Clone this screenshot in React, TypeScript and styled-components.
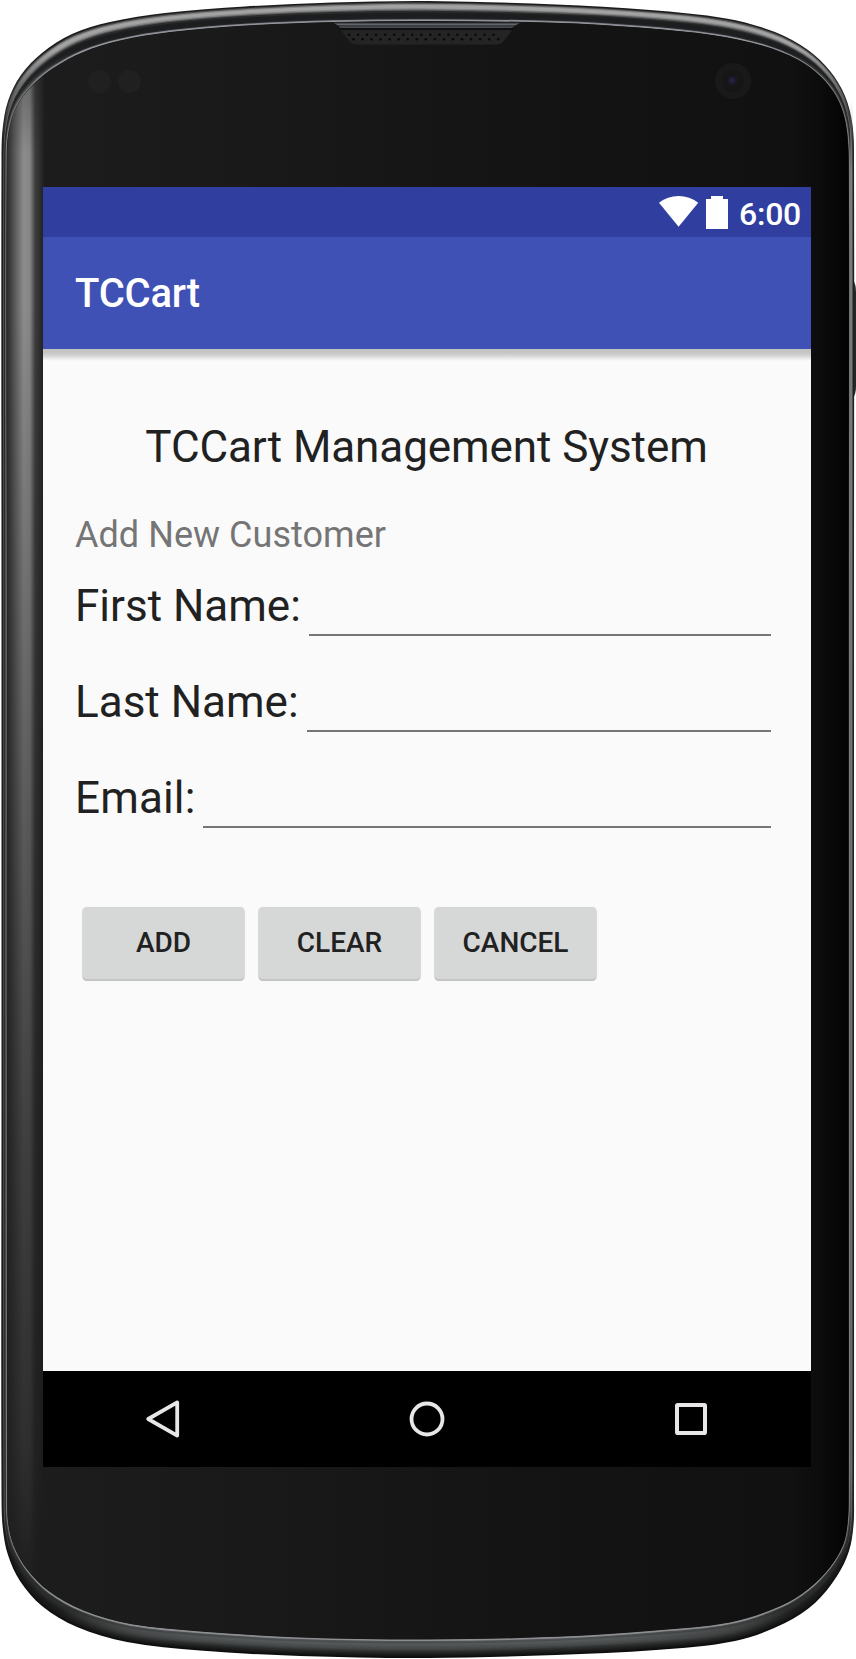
import React from "react";
import styled, { createGlobalStyle } from "styled-components";

const GlobalStyle = createGlobalStyle`
  body {
    margin: 0;
    background: #ffffff;
  }
  *, *::before, *::after {
    box-sizing: border-box;
  }
`;

type Point = [number, number];

/* Outer silhouette of the phone and the edge of its glass, matched point by point. */
const outerEdge: Point[] = [
  [428, 1], [333, 2.5], [245, 6.5], [165, 13], [110, 22], [72, 34], [42, 53], [21, 75], [8, 101], [2.5, 130], [1.5, 160],
  [1.5, 600], [1.5, 1100],
  [1.5, 1500], [3, 1530], [8, 1555], [20, 1581], [42, 1606], [77, 1627], [127, 1642], [200, 1650.5], [300, 1656], [428, 1658],
  [556, 1655], [656, 1650], [735, 1641], [785, 1623], [815, 1603], [837, 1576], [849, 1551], [853.5, 1525], [854, 1495],
  [854, 1100], [854, 600],
  [854, 160], [852.5, 125], [845, 96], [830, 71], [808, 50], [775, 32], [726, 18.5], [650, 10], [556, 4.5],
];
const innerEdge: Point[] = [
  [428, 21.5], [333, 22.5], [245, 26], [170, 32.5], [120, 41], [83, 52.5], [54, 68], [33, 85], [17, 106], [9, 131], [7, 160],
  [7, 600], [7, 1100],
  [7.5, 1500], [8.5, 1524], [14, 1546], [27, 1569], [49, 1591], [83, 1610], [132, 1624], [200, 1631], [300, 1637], [428, 1639],
  [556, 1636.5], [656, 1630], [730, 1622], [780, 1606], [808, 1589], [830, 1567], [843, 1545], [847.5, 1523], [848.5, 1495],
  [848.5, 1100], [848.5, 600],
  [848.5, 160], [845.5, 123], [837, 98], [821, 77], [798, 60], [763, 46], [714, 35.5], [643, 28], [556, 23],
];

const bandBetween = (t: number): Point[] =>
  outerEdge.map(([x, y], i) => [x + (innerEdge[i][0] - x) * t, y + (innerEdge[i][1] - y) * t]);

/* Closed smooth curve through the points. */
const smooth = (pts: Point[]): string => {
  const n = pts.length;
  const dist = (a: Point, b: Point) => Math.hypot(a[0] - b[0], a[1] - b[1]);
  let d = `M${pts[0][0]},${pts[0][1]}`;
  for (let i = 0; i < n; i++) {
    const p0 = pts[(i - 1 + n) % n];
    const p1 = pts[i];
    const p2 = pts[(i + 1) % n];
    const p3 = pts[(i + 2) % n];
    const len = dist(p1, p2);
    const a = dist(p0, p2) || 1;
    const b = dist(p1, p3) || 1;
    const c1 = [p1[0] + ((p2[0] - p0[0]) / a) * (len / 3), p1[1] + ((p2[1] - p0[1]) / a) * (len / 3)];
    const c2 = [p2[0] - ((p3[0] - p1[0]) / b) * (len / 3), p2[1] - ((p3[1] - p1[1]) / b) * (len / 3)];
    d += `C${c1.map((v) => v.toFixed(2))} ${c2.map((v) => v.toFixed(2))} ${p2}`;
  }
  return d + "Z";
};

/* Rim colours from the outside in: offset, top, side, bottom corner, bottom. */
const rim: [number, string, string, string, string][] = [
  [0, "#1b1c1b", "#2b2d2c", "#101010", "#0d0d0d"],
  [0.08, "#4b4c4b", "#202221", "#131313", "#141414"],
  [0.14, "#868786", "#191b1a", "#161616", "#191a1a"],
  [0.2, "#a3a4a3", "#1b1d1c", "#181818", "#202121"],
  [0.28, "#a0a1a0", "#1e201f", "#1a1a1a", "#2a2c2c"],
  [0.36, "#858685", "#4a4c4a", "#1c1c1c", "#363838"],
  [0.42, "#5a5b5b", "#6b6d6a", "#1e1e1e", "#3e4141"],
  [0.48, "#2b2c2d", "#2c2e2d", "#222323", "#474a4a"],
  [0.56, "#1d1e20", "#242625", "#282929", "#4e5151"],
  [0.66, "#1c1d1f", "#3c3e3d", "#2b2c2c", "#555858"],
  [0.76, "#1d1e20", "#77787a", "#2a2b2b", "#4b4e4e"],
  [0.84, "#26282b", "#8b8c88", "#3c3d3e", "#505254"],
  [0.89, "#868890", "#70726f", "#8a8b8d", "#8a8c90"],
  [0.94, "#9a9ca1", "#3c3d3c", "#8d8f91", "#8f9195"],
  [0.98, "#141414", "#181818", "#131313", "#151515"],
];

const Device = styled.main`
  display: grid;
  width: 856px;
  height: 1659px;
  overflow: hidden;
  font-family: Roboto, "Liberation Sans", sans-serif;
`;

const Casing = styled.svg`
  grid-area: 1 / 1;
  display: block;
`;

const Screen = styled.section`
  grid-area: 1 / 1;
  z-index: 1;
  display: flex;
  flex-direction: column;
  width: 768px;
  height: 1280px;
  margin: 187px 0 0 43px;
  background: #fafafa;
`;

const StatusBar = styled.div`
  display: flex;
  height: 50px;
  padding: 9px 10px 0 0;
  justify-content: flex-end;
  background: #303f9f;
`;

const StatusIcons = styled.svg`
  display: block;
  margin-right: 11px;
`;

const Clock = styled.time`
  padding-top: 1px;
  font-size: 32px;
  font-weight: 500;
  line-height: 35px;
  letter-spacing: -0.25px;
  color: #ffffff;
`;

const AppBar = styled.header`
  height: 112px;
  padding: 1px 0 0 32px;
  background: #3f51b5;
`;

const AppTitle = styled.h1`
  margin: 0;
  font-size: 40px;
  font-weight: 500;
  line-height: 112px;
  letter-spacing: -0.2px;
  color: #ffffff;
`;

const BarShadow = styled.div`
  height: 12px;
  background: linear-gradient(#c3c2c3 0, #c6c5c6 30%, #d4d4d4 55%, #ececec 82%, #fafafa 100%);
`;

const Content = styled.form`
  flex: 1;
  padding: 60px 32px 0;
`;

const Heading = styled.h2`
  margin: 0 1px 41px 0;
  font-size: 44px;
  font-weight: 400;
  line-height: 52px;
  letter-spacing: -0.08px;
  text-align: center;
  color: #212121;
`;

const Subheading = styled.p`
  margin: 0;
  font-size: 36px;
  line-height: 42px;
  letter-spacing: 0.04px;
  color: #757575;
`;

const Field = styled.div`
  display: flex;
  height: 96px;
`;

const FieldLabel = styled.label<{ $tracking?: number }>`
  padding-top: 24px;
  font-size: 44px;
  line-height: 52px;
  letter-spacing: ${({ $tracking = 0 }) => $tracking}px;
  white-space: nowrap;
  color: #212121;
`;

const FieldInput = styled.input`
  flex: 1;
  min-width: 0;
  height: 80px;
  margin: 0 8px;
  padding: 24px 0 0;
  border: 0;
  border-bottom: 2px solid #757575;
  border-radius: 0;
  outline: none;
  background: transparent;
  font: 400 36px Roboto, sans-serif;
  color: #212121;
`;

const Actions = styled.div`
  display: flex;
  gap: 15px;
  margin: 63px 8px 0;
`;

const ActionButton = styled.button`
  width: 161px;
  height: 72px;
  padding: 0;
  border: 0;
  border-radius: 4px;
  background: #d6d7d7;
  box-shadow: 0 2px 0 #c4c5c5, 0 1px 1px 1px rgba(0, 0, 0, 0.14);
  font: 500 28px/72px Roboto, sans-serif;
  color: #212121;
`;

const NavBar = styled.nav`
  display: flex;
  align-items: center;
  justify-content: space-between;
  height: 96px;
  padding: 0 100px;
  background: #000000;
`;

const NavIcon = styled.svg`
  display: block;
  fill: none;
  stroke: #e8e6e6;
  stroke-linejoin: round;
`;

const grille = Array.from({ length: 34 }, (_, i) => ({ x: 349 + i * 4.52, y: i % 2 ? 39.3 : 34.7 }));

const PhoneCasing = () => (
  <Casing width="856" height="1659" viewBox="0 0 856 1659" aria-hidden="true">
    <defs>
      {rim.map(([t, top, side, corner, bottom]) => (
        <linearGradient key={t} id={`rim${t * 100}`} gradientUnits="userSpaceOnUse" x1="0" y1="0" x2="0" y2="1659">
          <stop offset="0.03" stopColor={top} />
          <stop offset="0.085" stopColor={side} />
          <stop offset="0.91" stopColor={side} />
          <stop offset="0.94" stopColor={corner} />
          <stop offset="0.97" stopColor={corner} />
          <stop offset="0.988" stopColor={bottom} />
        </linearGradient>
      ))}
      <linearGradient id="glass" x1="0" x2="1" y1="0" y2="0">
        <stop offset="0" stopColor="#1d1d1d" />
        <stop offset="0.3" stopColor="#191919" />
        <stop offset="0.6" stopColor="#141414" />
        <stop offset="0.93" stopColor="#111111" />
        <stop offset="0.97" stopColor="#0b0b0b" />
        <stop offset="1" stopColor="#020202" />
      </linearGradient>
      <linearGradient id="sheen" gradientUnits="userSpaceOnUse" x1="7" x2="44" y1="0" y2="0">
        <stop offset="0" stopColor="#a0a0a0" stopOpacity="0.1" />
        <stop offset="0.2" stopColor="#a0a0a0" stopOpacity="0.45" />
        <stop offset="0.45" stopColor="#a0a0a0" stopOpacity="0.85" />
        <stop offset="0.62" stopColor="#a0a0a0" stopOpacity="0.8" />
        <stop offset="0.76" stopColor="#a0a0a0" stopOpacity="0.25" />
        <stop offset="1" stopColor="#a0a0a0" stopOpacity="0.03" />
      </linearGradient>
      <linearGradient id="fade" gradientUnits="userSpaceOnUse" x1="0" x2="0" y1="60" y2="1600">
        <stop offset="0" stopColor="#fff" stopOpacity="0.6" />
        <stop offset="0.06" stopColor="#fff" />
        <stop offset="0.16" stopColor="#fff" />
        <stop offset="0.4" stopColor="#fff" stopOpacity="0.68" />
        <stop offset="0.5" stopColor="#fff" stopOpacity="0.55" />
        <stop offset="0.7" stopColor="#fff" stopOpacity="0.32" />
        <stop offset="0.9" stopColor="#fff" stopOpacity="0.17" />
        <stop offset="1" stopColor="#fff" stopOpacity="0" />
      </linearGradient>
      <linearGradient id="edge" gradientUnits="userSpaceOnUse" x1="0" x2="0" y1="100" y2="1545">
        <stop offset="0" stopColor="#8a8c8d" stopOpacity="0" />
        <stop offset="0.05" stopColor="#8a8c8d" stopOpacity="0.8" />
        <stop offset="0.95" stopColor="#77797a" stopOpacity="0.7" />
        <stop offset="1" stopColor="#77797a" stopOpacity="0" />
      </linearGradient>
      <linearGradient id="notch" x1="0" x2="0" y1="0" y2="1">
        <stop offset="0" stopColor="#292b2f" />
        <stop offset="0.3" stopColor="#65676e" />
        <stop offset="0.5" stopColor="#303136" />
        <stop offset="0.75" stopColor="#4d4e53" />
        <stop offset="1" stopColor="#1d1e20" />
      </linearGradient>
      <clipPath id="glassClip">
        <path d={smooth(innerEdge)} />
      </clipPath>
      <mask id="sheenMask" maskUnits="userSpaceOnUse" x="0" y="0" width="60" height="1659">
        <rect width="60" height="1659" fill="url(#fade)" />
      </mask>
    </defs>

    <path d="M853 280Q856 284 856 292V386Q856 394 853 398Z" fill="#242525" />
    {rim.map(([t]) => (
      <path key={t} d={smooth(bandBetween(t))} fill={`url(#rim${t * 100})`} />
    ))}
    <rect x="850" y="100" width="2.500" height="1445" fill="url(#edge)" />
    <path d={smooth(innerEdge)} fill="url(#glass)" />
    <g clipPath="url(#glassClip)">
      <rect x="7" width="37" height="1659" fill="url(#sheen)" mask="url(#sheenMask)" />
    </g>

    <path d="M331 22.5H523Q517 23 511 29H341Q337 23 331 22.5Z" fill="url(#notch)" />
    <path d="M340 29H513L504 41Q501 44.5 496 44.5H358Q352 44.5 349 41Z" fill="#242424" />
    <path d="M340 29H513" stroke="#070707" strokeWidth="1.4" />
    {grille.map((hole) => (
      <circle key={hole.x} cx={hole.x} cy={hole.y} r="1.3" fill="#090909" />
    ))}

    <circle cx="99.500" cy="81.500" r="11.500" fill="#202020" />
    <circle cx="129.500" cy="81.500" r="11.500" fill="#202020" />
    <circle cx="733" cy="81" r="18" fill="#191919" />
    <circle cx="733" cy="81" r="11" fill="#161617" />
    <circle cx="732.500" cy="80.500" r="5" fill="#1a1928" />
    <circle cx="732" cy="80.500" r="2.500" fill="#25213f" />
  </Casing>
);

const fields = [
  { id: "first-name", label: "First Name:" },
  { id: "last-name", label: "Last Name:" },
  { id: "email", label: "Email:", tracking: 0.15 },
];

export default function App() {
  return (
    <>
      <GlobalStyle />
      <Device>
        <PhoneCasing />
        <Screen>
          <StatusBar>
            <StatusIcons width="69" height="34" viewBox="0 0 69 34" fill="#ffffff" aria-hidden="true">
              <path d="M0 6.800Q8.500 0 19.600 0T39.200 6.800L19.600 30.800Z" />
              <path d="M52 0H64V3H69V33H47V3H52Z" />
            </StatusIcons>
            <Clock>6:00</Clock>
          </StatusBar>
          <AppBar>
            <AppTitle>TCCart</AppTitle>
          </AppBar>
          <BarShadow />
          <Content>
            <Heading>TCCart Management System</Heading>
            <Subheading>Add New Customer</Subheading>
            {fields.map(({ id, label, tracking }) => (
              <Field key={id}>
                <FieldLabel htmlFor={id} $tracking={tracking}>{label}</FieldLabel>
                <FieldInput id={id} />
              </Field>
            ))}
            <Actions>
              <ActionButton type="button">ADD</ActionButton>
              <ActionButton type="button">CLEAR</ActionButton>
              <ActionButton type="button">CANCEL</ActionButton>
            </Actions>
          </Content>
          <NavBar>
            <NavIcon width="40" height="40" viewBox="0 0 40 40" strokeWidth="3.800">
              <path d="M5.200 20L34.200 3.400V36.600Z" />
            </NavIcon>
            <NavIcon width="40" height="40" viewBox="0 0 40 40" strokeWidth="3.800">
              <circle cx="20" cy="20" r="15.500" />
            </NavIcon>
            <NavIcon width="40" height="40" viewBox="0 0 40 40" strokeWidth="4">
              <rect x="6" y="6" width="28" height="28" rx="0.800" />
            </NavIcon>
          </NavBar>
        </Screen>
      </Device>
    </>
  );
}
